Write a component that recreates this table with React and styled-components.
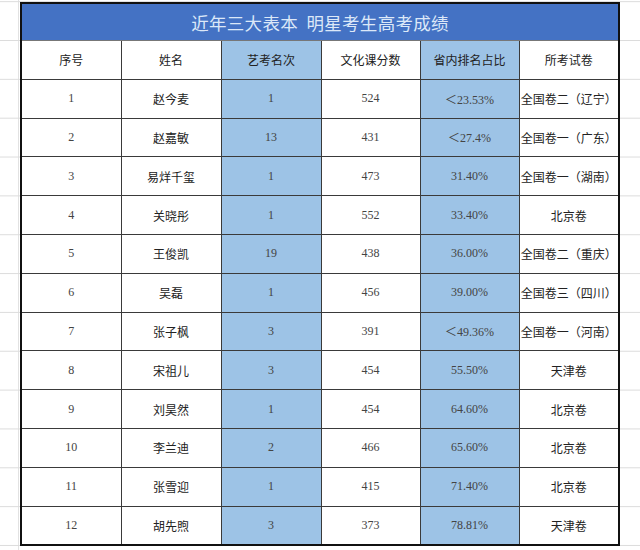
import React from 'react';
import styled, { createGlobalStyle } from 'styled-components';

const GlobalStyle = createGlobalStyle`
  body {
    margin: 0;
    background: #fff;
    font-family: "Noto Sans CJK SC", "Noto Sans", sans-serif;
  }
`

const Sheet = styled.div`
  width: 640px;
  height: 550px;
  box-sizing: border-box;
  padding: 2px 0 0 20px;
  background: #fff;
  overflow: hidden;
  position: relative;
`

const Gridlines = styled.div`
  position: absolute;
  inset: 0;
  background-image:
    linear-gradient(to bottom, #dcdcdc 0, #dcdcdc 1px, transparent 1px),
    linear-gradient(to right, transparent 18px, #e2e2e2 18px, #e2e2e2 19px, transparent 19px);
  background-size: 100% 38.85px, 100% 100%;
  background-position: 0 40px, 0 0;
  background-repeat: repeat-y, no-repeat;
  pointer-events: none;
`

const Table = styled.table`
  position: relative;
  border-collapse: collapse;
  table-layout: fixed;
  width: 598px;
  border: 2px solid #111;
  background: #fff;
`

const TitleCell = styled.th`
  height: 36px;
  padding: 0;
  background: #4472c4;
  color: #dce8f8;
  font-size: 17.5px;
  font-weight: 400;
  letter-spacing: 0.3px;
  text-align: center;
  border-bottom: 1px solid #777;
`

const Cell = styled.td`
  height: 37.8px;
  padding: 0;
  text-align: center;
  border: 1px solid #3a3a3a;
  background: ${p => (p.$blue ? '#9dc3e6' : '#fff')};
  color: ${p => (p.$num ? '#444' : '#222')};
  font-size: 12px;
  font-family: ${p =>
    p.$num
      ? '"Liberation Serif", "Noto Sans CJK SC", serif'
      : '"Noto Sans CJK SC", sans-serif'};
  white-space: nowrap;
  overflow: hidden;
`

const HeadCell = styled(Cell).attrs({ as: 'th' })`
  font-weight: 400;
  color: #222;
`

const COLUMNS = ['序号', '姓名', '艺考名次', '文化课分数', '省内排名占比', '所考试卷']
const WIDTHS = [100, 100, 100, 99, 99, 100]

const ROWS = [
  ['1', '赵今麦', '1', '524', '＜23.53%', '全国卷二（辽宁）'],
  ['2', '赵嘉敏', '13', '431', '＜27.4%', '全国卷一（广东）'],
  ['3', '易烊千玺', '1', '473', '31.40%', '全国卷一（湖南）'],
  ['4', '关晓彤', '1', '552', '33.40%', '北京卷'],
  ['5', '王俊凯', '19', '438', '36.00%', '全国卷二（重庆）'],
  ['6', '吴磊', '1', '456', '39.00%', '全国卷三（四川）'],
  ['7', '张子枫', '3', '391', '＜49.36%', '全国卷一（河南）'],
  ['8', '宋祖儿', '3', '454', '55.50%', '天津卷'],
  ['9', '刘昊然', '1', '454', '64.60%', '北京卷'],
  ['10', '李兰迪', '2', '466', '65.60%', '北京卷'],
  ['11', '张雪迎', '1', '415', '71.40%', '北京卷'],
  ['12', '胡先煦', '3', '373', '78.81%', '天津卷'],
]

const BLUE = [false, false, true, false, true, false]
const NUMERIC = [true, false, true, true, true, false]

export default function App() {
  return (
    <>
      <GlobalStyle />
      <Sheet>
        <Gridlines />
        <Table>
          <colgroup>
            {WIDTHS.map((w, i) => <col key={i} style={{ width: w }} />)}
          </colgroup>
          <thead>
            <tr>
              <TitleCell colSpan={6}>近年三大表本&nbsp;&nbsp;明星考生高考成绩</TitleCell>
            </tr>
            <tr>
              {COLUMNS.map((c, i) => (
                <HeadCell key={c} $blue={BLUE[i]}>{c}</HeadCell>
              ))}
            </tr>
          </thead>
          <tbody>
            {ROWS.map(row => (
              <tr key={row[0]}>
                {row.map((v, i) => (
                  <Cell key={i} $blue={BLUE[i]} $num={NUMERIC[i]}>
                    {v}
                  </Cell>
                ))}
              </tr>
            ))}
          </tbody>
        </Table>
      </Sheet>
    </>
  );
}
